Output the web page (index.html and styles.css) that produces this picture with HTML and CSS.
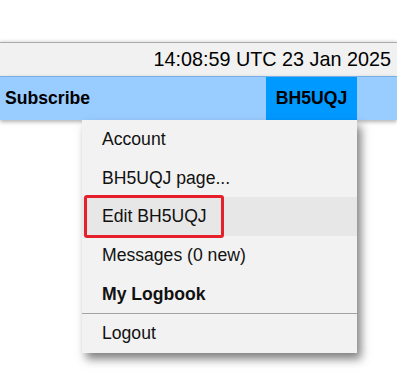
FILE: index.html
```html
<!DOCTYPE html>
<html lang="en">
<head>
  <meta charset="UTF-8" />
  <meta name="viewport" content="width=device-width, initial-scale=1" />
  <title>Logbook</title>
  <link rel="stylesheet" href="styles.css">
</head>
<body>
  <div class="page-top"></div>
  <div class="clock-bar">14:08:59 UTC 23 Jan 2025</div>
  <nav class="nav-bar">
    <a class="nav-link" href="#">Subscribe</a>
    <div class="user-menu">
      <a class="user-btn" href="#">BH5UQJ</a>
      <ul class="dropdown">
        <li><a href="#">Account</a></li>
        <li><a href="#">BH5UQJ page...</a></li>
        <li class="active"><a href="#">Edit BH5UQJ</a><span class="mark"></span></li>
        <li><a href="#">Messages (0 new)</a></li>
        <li><a class="strong" href="#">My Logbook</a></li>
        <li class="sep"><a href="#">Logout</a></li>
      </ul>
    </div>
  </nav>
</body>
</html>
```

FILE: styles.css
```css
body {
  margin: 0;
  padding: 0;
  font-family: 'Liberation Sans', Arial, sans-serif;
  background: #fff;
  color: #111;
  min-height: 384px;
}
a {
  color: inherit;
  text-decoration: none;
}
.page-top {
  height: 42px;
}
.clock-bar {
  height: 33px;
  border-top: 1px solid #ababab;
  box-shadow: 0 -1px 3px rgba(0, 0, 0, 0.15);
  background-color: #f1f1f1;
  font-size: 19.8px;
  line-height: 33px;
  text-align: right;
  padding-right: 6px;
  color: #000;
}
.nav-bar {
  display: flex;
  height: 43px;
  border-top: 1px solid #78aee6;
  background-color: #99ccff;
  box-shadow: 0 2px 4px rgba(0, 0, 0, 0.3);
  position: relative;
  z-index: 5;
}
.nav-link {
  display: flex;
  align-items: center;
  padding: 0 5px;
  font-weight: bold;
  font-size: 17.6px;
  color: #000;
}
.user-menu {
  position: relative;
  margin-left: auto;
  margin-right: 40px;
  width: 91px;
}
.user-btn {
  display: block;
  height: 43px;
  line-height: 43px;
  text-align: center;
  background-color: #0099ff;
  font-weight: bold;
  font-size: 17.6px;
  color: #000;
}
.dropdown {
  position: absolute;
  top: 43px;
  right: 0;
  width: 275px;
  margin: 0;
  padding: 0;
  list-style: none;
  background-color: #f2f2f2;
  box-shadow: 4px 6px 9px rgba(0, 0, 0, 0.5);
  z-index: 10;
}
.dropdown li {
  position: relative;
}
.dropdown li a {
  display: block;
  padding: 9.3px 20px;
  line-height: 20px;
  font-size: 17.6px;
  color: #111;
}
.dropdown li.active {
  background-color: #e7e7e7;
}
.dropdown li.sep {
  border-top: 1px solid #a3a3a3;
}
.dropdown a.strong {
  font-weight: bold;
}
.mark {
  position: absolute;
  left: 2px;
  top: -2px;
  width: 134px;
  height: 37px;
  border: 3px solid #e51f2c;
  border-radius: 3px;
  pointer-events: none;
}
```
